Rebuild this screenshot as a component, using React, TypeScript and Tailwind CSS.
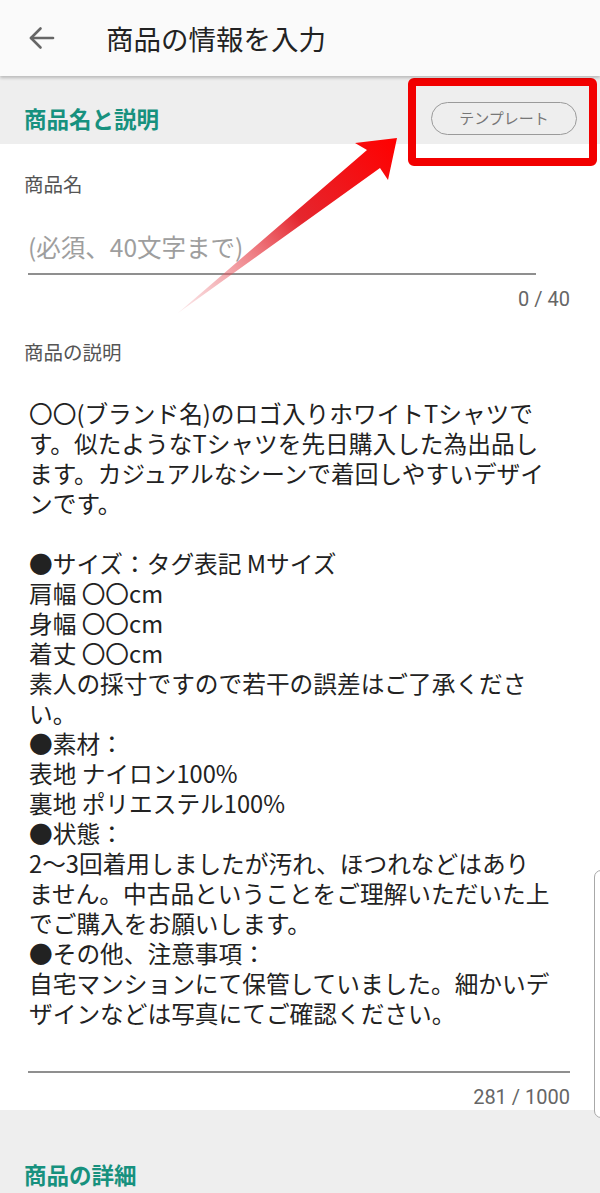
const lines = [
  "〇〇(ブランド名)のロゴ入りホワイトTシャツで",
  "す。似たようなTシャツを先日購入した為出品し",
  "ます。カジュアルなシーンで着回しやすいデザイ",
  "ンです。",
  "",
  "●サイズ：タグ表記 Mサイズ",
  "肩幅 〇〇cm",
  "身幅 〇〇cm",
  "着丈 〇〇cm",
  "素人の採寸ですので若干の誤差はご了承くださ",
  "い。",
  "●素材：",
  "表地 ナイロン100%",
  "裏地 ポリエステル100%",
  "●状態：",
  "2～3回着用しましたが汚れ、ほつれなどはあり",
  "ません。中古品ということをご理解いただいた上",
  "でご購入をお願いします。",
  "●その他、注意事項：",
  "自宅マンションにて保管していました。細かいデ",
  "ザインなどは写真にてご確認ください。",
];

function BackArrow() {
  return (
    <svg width="27" height="24" viewBox="0 0 27 24" fill="none" stroke="#666" strokeWidth="2.6" strokeLinecap="round" strokeLinejoin="round">
      <path d="M25 12H3" />
      <path d="M12.5 2.5L3 12l9.5 9.5" />
    </svg>
  );
}

function Annotation() {
  return (
    <>
      <div className="absolute left-[408px] top-[78px] w-[189px] h-[88px] border-[8px] border-[#f20000] rounded-[6px]" />
      <svg className="absolute left-0 top-0" width="600" height="400" viewBox="0 0 600 400">
        <defs>
          <linearGradient id="arrowFade" x1="397" y1="138" x2="178" y2="313" gradientUnits="userSpaceOnUse">
            <stop offset="0" stopColor="#ff0000" />
            <stop offset="0.45" stopColor="#e5262e" />
            <stop offset="1" stopColor="#e9707a" stopOpacity="0.15" />
          </linearGradient>
        </defs>
        <polygon points="178,313 367,150 355,143 397,138 388,180 380,168" fill="url(#arrowFade)" />
      </svg>
    </>
  );
}

export default function App() {
  return (
    <div className="relative w-[600px] h-[1193px] overflow-hidden bg-white font-['Noto_Sans_CJK_JP','Noto_Sans',sans-serif]">
      <header className="relative z-10 flex h-[76px] items-center bg-[#fafafa] shadow-[0_2px_3px_rgba(0,0,0,0.22)]">
        <div className="ml-[28px] flex items-center">
          <BackArrow />
        </div>
        <h1 className="ml-[51px] text-[27.5px] leading-[36px] text-[#222]">商品の情報を入力</h1>
      </header>

      <section className="flex h-[68px] items-center justify-between bg-[#eeeeee] pl-[24px] pr-[23px] pt-[16px]">
        <h2 className="text-[22.5px] font-bold leading-[28px] text-[#17917e]">商品名と説明</h2>
        <button className="flex h-[33px] w-[146px] items-center justify-center rounded-full border border-[#9a9a9a] text-[15px] text-[#777]">
          テンプレート
        </button>
      </section>

      <section className="flex flex-col pb-px pt-[28px]">
        <label className="pl-[24px] text-[19.5px] leading-[24px] text-[#555]">商品名</label>
        <div className="mt-[35px] pl-[28px] text-[24.5px] leading-[32px] text-[#9e9e9e]">(必須、40文字まで)</div>
        <div className="ml-[28px] mt-[10px] h-[2px] w-[508px] bg-[#8f8f8f]" />
        <div className="mt-[12px] pr-[30px] text-right font-['Roboto',sans-serif] text-[20px] leading-[24px] text-[#666]">0 / 40</div>

        <label className="mt-[29px] pl-[24px] text-[19.5px] leading-[24px] text-[#555]">商品の説明</label>
        <div className="mt-[34px] pl-[29px] text-[23.7px] leading-[30px] text-[#222]">
          {lines.map((line, i) => (
            <div key={i} className="h-[30px] whitespace-nowrap">
              {line}
            </div>
          ))}
        </div>
        <div className="ml-[28px] mt-[43px] h-[2px] w-[542px] bg-[#8f8f8f]" />
        <div className="mt-[12px] pr-[30px] text-right font-['Roboto',sans-serif] text-[20px] leading-[24px] text-[#666]">281 / 1000</div>
      </section>

      <section className="h-[200px] bg-[#eeeeee] pl-[24px] pt-[50px]">
        <h2 className="text-[22.5px] font-bold leading-[28px] text-[#17917e]">商品の詳細</h2>
      </section>

      <div className="absolute left-[594px] top-[870px] h-[248px] w-[14px] rounded-[9px] border-[1.5px] border-[#a8a8a8] bg-white" />

      <Annotation />
    </div>
  );
}
